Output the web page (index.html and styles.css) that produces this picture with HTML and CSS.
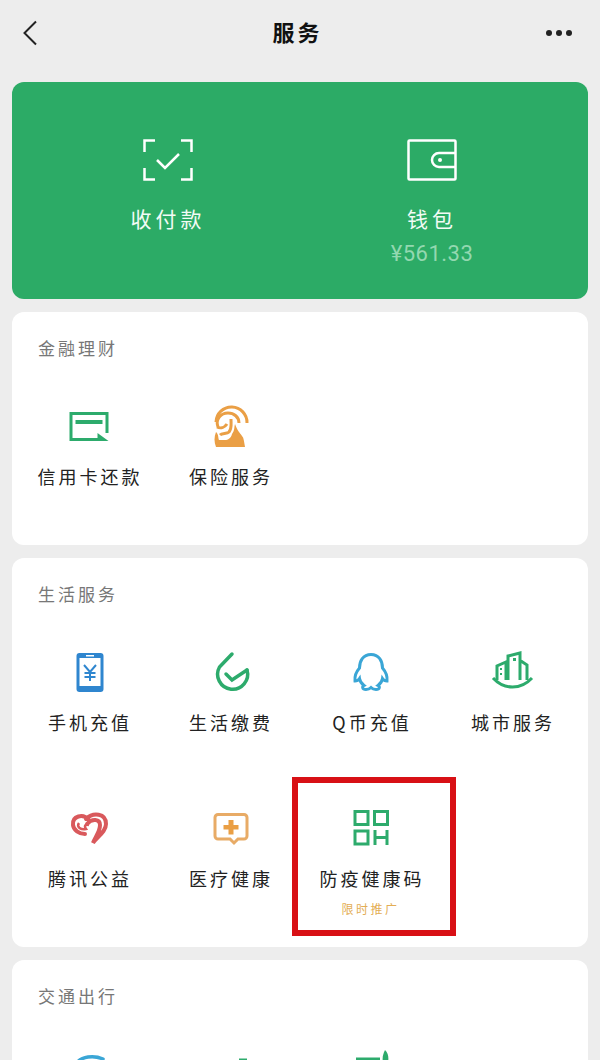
FILE: index.html
```html
<!DOCTYPE html>
<html lang="zh-CN">
<head>
    <meta charset="UTF-8">
    <meta name="viewport" content="width=device-width, initial-scale=1.0">
    <title>服务</title>
    <link rel="stylesheet" href="styles.css">
</head>
<body>
    <header class="top-bar">
        <svg class="back-icon" viewBox="0 0 14 26"><path d="M13 1.5 1.5 13 13 24.5"/></svg>
        <h1 class="page-title">服务</h1>
        <div class="more-dots"><span></span><span></span><span></span></div>
    </header>

    <section class="hero-card">
        <div class="hero-item">
            <svg class="hero-icon" viewBox="0 0 50 42">
                <path d="M1.5 13V1.5H12M38 1.5h10.500V13M1.500 29v11.500H12M38 40.500h10.500V29"/>
                <path d="M14 21l8 8 14-14"/>
            </svg>
            <div class="hero-label">收付款</div>
        </div>
        <div class="hero-item">
            <svg class="hero-icon" viewBox="0 0 50 42">
                <rect x="1.500" y="1.500" width="47" height="39" rx="1"/>
                <path d="M48.500 14H32a7 7 0 0 0 0 14h16.500"/>
                <circle cx="33" cy="21" r="2" class="wallet-dot"/>
            </svg>
            <div class="hero-label">钱包</div>
            <div class="hero-amount">¥561.33</div>
        </div>
    </section>

    <section class="service-card">
        <h2 class="card-title">金融理财</h2>
        <div class="service-grid">
            <div class="service-item">
                <svg class="service-icon" viewBox="0 0 48 48">
                    <path class="line green" d="M42 31V11.500H6v26h28"/>
                    <path class="solid green" d="M10.500 18h27v4h-27zM32.500 31l11 8h-11z"/>
                </svg>
                <div class="service-label">信用卡还款</div>
            </div>
            <div class="service-item">
                <svg class="service-icon" viewBox="0 0 48 48">
                    <path class="line orange" d="M10 20A15.500 15.500 0 0 1 41 21"/>
                    <path class="line orange" d="M12 25c-3-8 3-14 10-14 6 0 11 4 11 10"/>
                    <path class="line orange" d="M11 25c4 2 8 0 10-3M25 17c0 6 1 9-2 13-2 2-7 1-9 3"/>
                    <path class="solid orange" d="M10 30c3 3 2 6 3 8h6c3 0 6-2 7-6 3-4 2-7 3-10 2 6 5 9 7 12 2 2 2 6 3 11H10c-2-5-2-10 0-15z"/>
                </svg>
                <div class="service-label">保险服务</div>
            </div>
        </div>
    </section>

    <section class="service-card">
        <h2 class="card-title">生活服务</h2>
        <div class="service-grid">
            <div class="service-item">
                <svg class="service-icon" viewBox="0 0 48 48">
                    <rect class="solid blue" x="11.500" y="5" width="27" height="39" rx="3"/>
                    <rect class="solid white" x="14.500" y="10" width="21" height="28"/>
                    <rect class="solid white" x="21" y="7" width="8" height="1.500"/>
                    <path class="thin blue" d="M19 17l6 7 6-7M25 24v9M19.500 25h11M19.500 29h11"/>
                </svg>
                <div class="service-label">手机充值</div>
            </div>
            <div class="service-item">
                <svg class="service-icon" viewBox="0 0 48 48">
                    <path class="line green thick" d="M26 6 13.500 19A15 15 0 1 0 41 22"/>
                    <path class="line green thick" d="M20 26l6 6 15-10"/>
                </svg>
                <div class="service-label">生活缴费</div>
            </div>
            <div class="service-item">
                <svg class="service-icon" viewBox="0 0 48 48">
                    <path class="line sky" d="M24 6.500c-8 0-11.500 6.500-11.500 13.500C9 24 7.500 28.500 8 33c2 0 3.500-1 4.500-2.500.5 3.500 2.500 5.500 4.500 7-2 1-2 4 2 4 3 0 4-1 5-2 1 1 2 2 5 2 4 0 4-3 2-4 2-1.500 4-3.500 4.500-7 1 1.500 2.500 2.500 4.500 2.500.5-4.500-1-9-4.500-13C35.500 13 32 6.500 24 6.500z"/>
                </svg>
                <div class="service-label">Q币充值</div>
            </div>
            <div class="service-item">
                <svg class="service-icon" viewBox="0 0 48 48">
                    <path class="line green" d="M5 30c11 12 28 12 39 0"/>
                    <path class="line green" d="M9 32V18l9-4v18M20 32V8l12-3v27M33 13l6 4v15"/>
                    <path class="solid green" d="M12 20h2v2h-2zM12 25h2v2h-2zM25 10h3v3h-3z"/>
                </svg>
                <div class="service-label">城市服务</div>
            </div>
            <div class="service-item">
                <svg class="service-icon" viewBox="0 0 48 48">
                    <path class="heart" d="M24 16C18 9 7 12 8 21c.5 5 6 9 12 9"/>
                    <path class="heart" d="M21 15c7-7 20-6 20 5 0 8-9 13-13 19 2-6 7-11 7-18 0-6-8-7-13-1"/>
                    <path class="heart-thin" d="M14 19c-3 4 2 7 7 6-2-3-1-5 3-4"/>
                </svg>
                <div class="service-label">腾讯公益</div>
            </div>
            <div class="service-item">
                <svg class="service-icon" viewBox="0 0 48 48">
                    <path class="line peach" d="M12 10.500h26a3 3 0 0 1 3 3V32a3 3 0 0 1-3 3h-6l-4 4-4-4H12a3 3 0 0 1-3-3V13.500a3 3 0 0 1 3-3z"/>
                    <path class="solid orange" d="M22.500 16h5v5h5v4.500h-5v5h-5v-5h-5V21h5z"/>
                </svg>
                <div class="service-label">医疗健康</div>
            </div>
            <div class="service-item">
                <svg class="service-icon" viewBox="0 0 48 48">
                    <rect class="line green" x="8" y="7.500" width="13" height="13"/>
                    <rect class="line green" x="27.500" y="7.500" width="13" height="13"/>
                    <rect class="line green" x="8" y="27" width="13" height="13"/>
                    <path class="line green" d="M28 26v15M40 26v15M28 33.500h12"/>
                </svg>
                <div class="service-label">防疫健康码</div>
                <div class="service-note">限时推广</div>
                <div class="highlight-box"></div>
            </div>
        </div>
    </section>

    <section class="service-card cut-off">
        <h2 class="card-title">交通出行</h2>
        <div class="service-grid">
            <div class="service-item">
                <svg class="service-icon" viewBox="0 0 48 48"><path class="line sky thick" d="M11 14c5-8 18-9 27-5"/></svg>
            </div>
            <div class="service-item">
                <svg class="service-icon" viewBox="0 0 48 48"><path class="line green" d="M33 10h8"/></svg>
            </div>
            <div class="service-item">
                <svg class="service-icon" viewBox="0 0 48 48">
                    <path class="line green" d="M9 9h24"/>
                    <path class="solid green" d="M38 0c3 3 4 7 3 12h-5c-1-4 0-8 2-12z"/>
                </svg>
            </div>
        </div>
    </section>
</body>
</html>
```

FILE: styles.css
```css
* {
    box-sizing: border-box;
}

html, body {
    height: 1060px;
    overflow: hidden;
}

body {
    margin: 0;
    padding: 0 12px;
    background-color: #ededed;
    font-family: "Noto Sans CJK SC", "Noto Sans", sans-serif;
}

.top-bar {
    display: grid;
    grid-template-columns: 1fr auto 1fr;
    align-items: center;
    height: 66px;
    margin-bottom: 16px;
    padding: 0 16px 0 11px;
}

.back-icon {
    width: 14px;
    height: 26px;
    fill: none;
    stroke: #222222;
    stroke-width: 2;
}

.page-title {
    margin: 0 0 4px;
    font-size: 22px;
    font-weight: 700;
    letter-spacing: 3px;
    color: #111111;
}

.more-dots {
    display: flex;
    justify-content: flex-end;
    gap: 4px;
}

.more-dots span {
    width: 6px;
    height: 6px;
    border-radius: 50%;
    background-color: #222222;
}

.hero-card {
    display: grid;
    grid-template-columns: 1fr 1fr;
    height: 217px;
    margin-bottom: 13px;
    padding: 57px 24px 0;
    background-color: #2cab66;
    border-radius: 12px;
}

.hero-item {
    display: flex;
    flex-direction: column;
    align-items: center;
}

.hero-icon {
    width: 50px;
    height: 42px;
    margin-bottom: 23px;
    fill: none;
    stroke: #ffffff;
    stroke-width: 2.500;
}

.wallet-dot {
    fill: #ffffff;
    stroke: none;
}

.hero-label {
    font-size: 21px;
    line-height: 28px;
    letter-spacing: 4px;
    color: #f2fbf5;
}

.hero-amount {
    margin-top: 9px;
    font-family: Roboto, sans-serif;
    font-size: 22px;
    line-height: 26px;
    letter-spacing: 0.5px;
    color: #93d8b0;
}

.service-card {
    margin-bottom: 13px;
    padding: 24px 6px 0;
    background-color: #ffffff;
    border-radius: 12px;
}

/* last card runs off the bottom of the screen */
.service-card.cut-off {
    height: 100px;
    margin-bottom: 0;
    overflow: hidden;
    border-radius: 12px 12px 0 0;
}

.card-title {
    margin: 0 0 29px 20px;
    font-size: 17px;
    font-weight: 400;
    line-height: 24px;
    letter-spacing: 3px;
    color: #777777;
}

.service-grid {
    display: grid;
    grid-template-columns: repeat(4, 141px);
    grid-auto-rows: 156px;
}

.service-item {
    position: relative;
    display: flex;
    flex-direction: column;
    align-items: center;
    padding-top: 13px;
}

.service-icon {
    flex: none;
    width: 48px;
    height: 48px;
    margin-bottom: 14px;
    overflow: visible;
}

.service-label {
    padding-left: 3px;
    font-size: 18px;
    line-height: 24px;
    letter-spacing: 3px;
    white-space: nowrap;
    color: #222222;
}

.service-note {
    margin-top: 10px;
    font-size: 12px;
    line-height: 18px;
    letter-spacing: 2.500px;
    color: #e3ad55;
}

/* red marker drawn over the health code item */
.highlight-box {
    position: absolute;
    top: -14px;
    left: -8px;
    right: -15px;
    bottom: 11px;
    border: 6px solid #d81015;
}

.line {
    fill: none;
    stroke-width: 3;
}

.line.thick {
    stroke-width: 3.500;
    stroke-linecap: round;
}

.thin {
    fill: none;
    stroke-width: 2;
}

.line.green, .thin.green {
    stroke: #2dab6c;
}

.line.orange {
    stroke: #ea9f45;
}

.line.peach {
    stroke: #e8ab66;
}

.line.sky {
    stroke: #3aa6d6;
}

.thin.blue {
    stroke: #2f86cf;
}

.solid.green {
    fill: #2dab6c;
}

.solid.orange {
    fill: #ea9f45;
}

.solid.blue {
    fill: #2f86cf;
}

.solid.white {
    fill: #ffffff;
}

.heart {
    fill: none;
    stroke: #d9595c;
    stroke-width: 4;
    stroke-linecap: round;
}

.heart-thin {
    fill: none;
    stroke: #d9595c;
    stroke-width: 2.500;
}
```
